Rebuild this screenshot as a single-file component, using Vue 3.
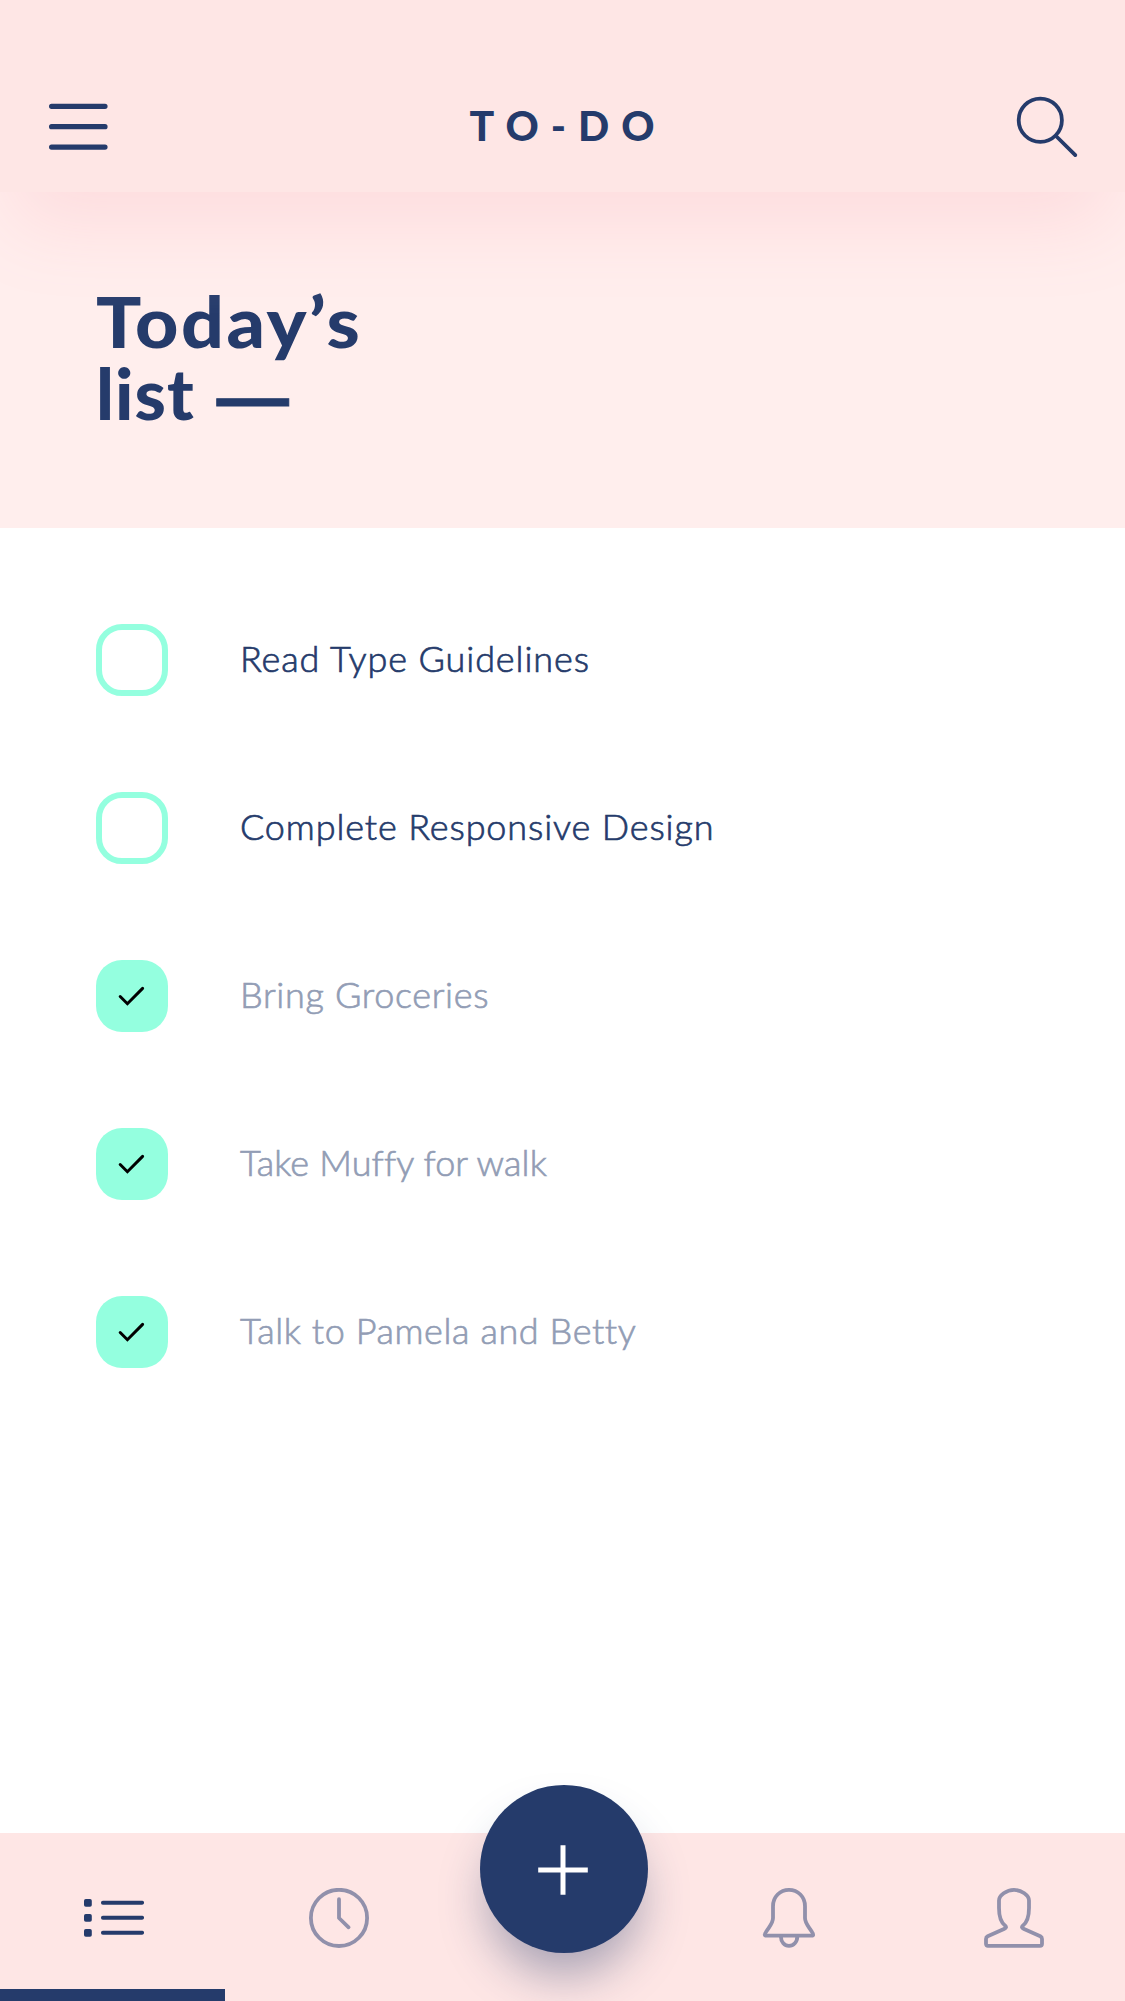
<script setup>
const tasks = [
  { text: 'Read Type Guidelines', done: false, spacing: 0.9 },
  { text: 'Complete Responsive Design', done: false, spacing: 0.87 },
  { text: 'Bring Groceries', done: true, spacing: 0.67 },
  { text: 'Take Muffy for walk', done: true, spacing: 0.12 },
  { text: 'Talk to Pamela and Betty', done: true, spacing: 0.59 },
]
</script>

<template>
  <main class="app">
    <header class="topbar">
      <button class="icon-btn menu" aria-label="Menu">
        <svg width="60" height="50" viewBox="0 0 60 50" fill="none" stroke="currentColor" stroke-width="5.2" stroke-linecap="round">
          <path d="M3.6 4.3H57M3.6 24.7H57M3.6 45.1H57" />
        </svg>
      </button>
      <h1 class="title">TO-DO</h1>
      <button class="icon-btn search" aria-label="Search">
        <svg width="62" height="62" viewBox="0 0 62 62" fill="none" stroke="currentColor" stroke-width="3.8" stroke-linecap="round">
          <circle cx="24.3" cy="24.2" r="21.6" />
          <path d="M40 40 59.3 59.100" />
        </svg>
      </button>
    </header>

    <section class="hero">
      <h2 class="heading">
        <span class="line day">Today’s</span>
        <span class="line"><span class="word">list</span><span class="dash">—</span></span>
      </h2>
    </section>

    <ul class="tasks">
      <li v-for="task in tasks" :key="task.text" class="task" :class="{ done: task.done }">
        <span class="box">
          <svg v-if="task.done" width="72" height="72" viewBox="0 0 72 72" fill="none" stroke="#000" stroke-width="3" stroke-linecap="round">
            <path d="M24.2 36.5 31.4 43.7 46.6 28.4" />
          </svg>
        </span>
        <span class="label" :style="{ letterSpacing: task.spacing + 'px' }">{{ task.text }}</span>
      </li>
    </ul>

    <nav class="tabs">
      <a class="tab active" aria-label="Lists">
        <svg width="60" height="60" viewBox="0 0 60 60" fill="currentColor">
          <rect x="0" y="11" width="7.8" height="7.8" rx="1.8" />
          <rect x="0" y="26" width="7.8" height="7.8" rx="1.8" />
          <rect x="0" y="41" width="7.8" height="7.8" rx="1.8" />
          <path d="M18.9 14.8H58.1M18.9 29.8H58.1M18.9 44.8H58.1" stroke="currentColor" stroke-width="3.9" stroke-linecap="round" />
        </svg>
      </a>
      <a class="tab" aria-label="History">
        <svg width="60" height="60" viewBox="0 0 60 60" fill="none" stroke="currentColor" stroke-width="3.8" stroke-linecap="round" stroke-linejoin="round">
          <circle cx="30" cy="29.9" r="28.1" />
          <path d="M30 11.2V30L39.6 39.3" />
        </svg>
      </a>
      <div class="add-slot">
        <button class="add" aria-label="Add task">
          <svg width="168" height="168" viewBox="0 0 168 168" fill="none" stroke="#fff" stroke-width="5">
            <path d="M58.2 85H107.8M83 60.2V109.8" />
          </svg>
        </button>
      </div>
      <a class="tab" aria-label="Notifications">
        <svg width="60" height="60" viewBox="0 0 60 60" fill="none" stroke="currentColor" stroke-width="3.8" stroke-linecap="round" stroke-linejoin="round">
          <path d="M14 18.2C14 8.8 21 1.9 30 1.9S46 8.8 46 18.2V30C46 35 48.5 37 53.2 44.2Q55.6 47.7 52.5 47.7H7.5Q4.4 47.7 6.8 44.2C11.5 37 14 35 14 30Z" />
          <path d="M21.900 48.5C21.9 54 25.5 57.8 30 57.8S38.300 54 38.300 48.5" />
        </svg>
      </a>
      <a class="tab" aria-label="Profile">
        <svg width="60" height="60" viewBox="0 0 60 60" fill="none" stroke="currentColor" stroke-width="3.8" stroke-linecap="round" stroke-linejoin="round">
          <path d="M15 12.5C15 7.5 22.5 1.9 30 1.9S45 7.5 45 12.5V20C45 29 43 34.5 38.8 37.7Q36.8 39.600 39.5 40.7L56.3 48.3Q58 49.2 58 51V55.8Q58 57.8 56 57.8H4Q2 57.8 2 55.8V51Q2 49.2 3.700 48.3L20.5 40.7Q23.2 39.600 21.2 37.7C17 34.5 15 29 15 20Z" />
        </svg>
      </a>
    </nav>
  </main>
</template>

<style>
body {
  margin: 0;
}
</style>

<style scoped>
.app {
  display: flex;
  flex-direction: column;
  height: 2001px;
  overflow: hidden;
  background: #fff;
  color: #253b6b;
  font-family: Lato, 'Open Sans', sans-serif;
}

svg {
  display: block;
}

button {
  padding: 0;
  border: 0;
  background: none;
  color: inherit;
}

.topbar {
  position: relative;
  z-index: 1;
  box-sizing: border-box;
  flex: none;
  display: grid;
  grid-template-columns: 1fr auto 1fr;
  align-items: start;
  height: 192px;
  padding: 96px 47px 0 48px;
  background: #fee6e5;
  box-shadow: 0 45px 80px -12px #fedcde;
}

.menu {
  justify-self: start;
  margin-top: 6px;
}

.search {
  justify-self: end;
}

.title {
  margin: 5px 0 0;
  padding-left: 10px;
  font-size: 41px;
  line-height: 50px;
  font-weight: 900;
  letter-spacing: 12px;
}

.hero {
  box-sizing: border-box;
  flex: none;
  height: 336px;
  padding: 93px 96px 0;
  background: #ffeeed;
}

.heading {
  margin: 0;
  font-size: 71px;
  line-height: 72px;
  font-weight: 900;
}

.line {
  display: flex;
}

.day {
  letter-spacing: 2.4px;
  transform: scaleX(1.06);
  transform-origin: left;
}

.word {
  letter-spacing: 1px;
}

.dash {
  margin: 4px 0 -4px 22px;
  font-family: 'Liberation Sans', sans-serif;
  font-size: 72px;
  font-weight: 700;
  -webkit-text-stroke: 1px currentColor;
}

.tasks {
  flex: 1;
  display: flex;
  flex-direction: column;
  gap: 96px;
  margin: 0;
  padding: 96px 96px 0;
  list-style: none;
}

.task {
  display: flex;
  align-items: center;
  gap: 72px;
  height: 72px;
}

.box {
  box-sizing: border-box;
  flex: none;
  width: 72px;
  height: 72px;
  border: 6px solid #94ffdf;
  border-radius: 26px;
}

.done .box {
  border: 0;
  background: #94ffdf;
}

.label {
  padding-bottom: 3px;
  font-size: 36px;
  line-height: 43px;
  font-weight: 300;
  white-space: nowrap;
  -webkit-text-stroke: 0.7px currentColor;
}

.done .label {
  color: #929db5;
}

.tabs {
  flex: none;
  display: grid;
  grid-template-columns: repeat(5, 1fr);
  height: 168px;
  background: #fee6e5;
}

.tab {
  box-sizing: border-box;
  display: flex;
  justify-content: center;
  padding: 55px 0 0 3px;
  color: #9190ab;
}

.tab.active {
  color: #253b6b;
  border-bottom: 12px solid #253b6b;
}

.add-slot {
  display: flex;
  justify-content: center;
  padding-left: 3px;
}

.add {
  flex: none;
  width: 168px;
  height: 168px;
  margin-top: -48px;
  border-radius: 50%;
  background: #253b6b;
  box-shadow: 0 30px 48px -8px rgba(37, 59, 107, 0.4);
}
</style>
